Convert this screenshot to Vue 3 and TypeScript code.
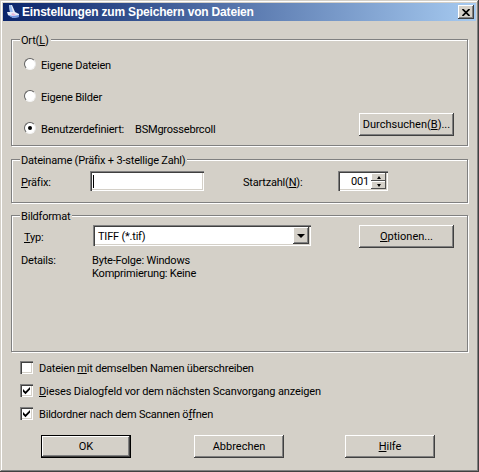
<script setup lang="ts">
const radios = [
  { label: 'Eigene Dateien', checked: false },
  { label: 'Eigene Bilder', checked: false },
  { label: 'Benutzerdefiniert:', checked: true },
]
</script>

<template>
  <div class="win">
    <div class="title">
      <svg class="appicon" width="16" height="16" viewBox="0 0 16 16">
        <path d="M4 1 L7 1 L10 8 L14 10 L14 13 L8 14 L3 11 L2 8 L5 8 Z" fill="#e6ecf8" />
        <path d="M4 1 L6 1 L8 8 L5 8 Z" fill="#9cbdf0" />
        <path d="M3 11 L8 14 L14 13 L14 11 L8 12 Z" fill="#6f95e0" />
        <path d="M6 10 L8 9 L11 11 L8 12 Z" fill="#e4b6d8" />
      </svg>
      <span class="title-text">Einstellungen zum Speichern von Dateien</span>
      <span class="close">
        <svg width="8" height="7" viewBox="0 0 8 7">
          <path d="M0.5 0 L7.5 7 M7.5 0 L0.5 7" stroke="#000" stroke-width="1.7" fill="none" />
        </svg>
      </span>
    </div>

    <div class="body">
      <section class="group ort">
        <div class="legend">Ort(<u>L</u>)</div>
        <div class="radios">
          <div v-for="r in radios" :key="r.label" class="radio-row">
            <span class="radio" :class="{ on: r.checked }"></span>
            <span class="radio-label">{{ r.label }}</span>
            <span v-if="r.checked" class="radio-path">BSMgrossebrcoll</span>
          </div>
        </div>
        <button class="btn browse">Durchsuchen(<u>B</u>)...</button>
      </section>

      <section class="group name">
        <div class="legend">Dateiname (Präfix + 3-stellige Zahl)</div>
        <div class="name-row">
          <span class="prefix-label"><u>P</u>räfix:</span>
          <span class="field prefix"><i class="caret"></i></span>
          <span class="start-label">Startzahl(<u>N</u>):</span>
          <span class="field spin">
            <span class="spin-val">001</span>
            <span class="spin-btns">
              <span class="spin-btn"><i class="tri up"></i></span>
              <span class="spin-btn"><i class="tri down"></i></span>
            </span>
          </span>
        </div>
      </section>

      <section class="group format">
        <div class="legend">Bildformat</div>
        <div class="type-row">
          <span class="type-label"><u>T</u>yp:</span>
          <span class="field combo">
            <span class="combo-val">TIFF (*.tif)</span>
            <span class="combo-btn"><i class="tri big"></i></span>
          </span>
          <button class="btn options"><u>O</u>ptionen...</button>
        </div>
        <div class="details">
          <span class="details-key">Details:</span>
          <span>Byte-Folge: Windows<br />Komprimierung: Keine</span>
        </div>
      </section>

      <div class="checks">
        <div class="check-row">
          <span class="check"></span>
          <span class="check-label">Dateien <u>m</u>it demselben Namen überschreiben</span>
        </div>
        <div class="check-row">
          <span class="check">
            <svg width="9" height="9" viewBox="0 0 9 9"><path d="M1 3 L3.5 5.5 L8 1 V3.6 L3.5 8.2 L1 5.7 Z" fill="#000" /></svg>
          </span>
          <span class="check-label wide"><u>D</u>ieses Dialogfeld vor dem nächsten Scanvorgang anzeigen</span>
        </div>
        <div class="check-row">
          <span class="check">
            <svg width="9" height="9" viewBox="0 0 9 9"><path d="M1 3 L3.5 5.5 L8 1 V3.6 L3.5 8.2 L1 5.7 Z" fill="#000" /></svg>
          </span>
          <span class="check-label">Bildordner nach dem Scannen ö<u>f</u>fnen</span>
        </div>
      </div>

      <div class="actions">
        <button class="btn action default">OK</button>
        <button class="btn action">Abbrechen</button>
        <button class="btn action last"><u>H</u>ilfe</button>
      </div>
    </div>
  </div>
</template>

<style scoped>
.win {
  box-sizing: border-box;
  width: 479px;
  height: 472px;
  background: #d4d0c8;
  padding: 3px;
  box-shadow: inset -1px -1px 0 #404040, inset 1px 1px 0 #d4d0c8, inset -2px -2px 0 #808080, inset 2px 2px 0 #ffffff;
  font-family: Roboto, "Liberation Sans", sans-serif;
  font-size: 11px;
  letter-spacing: -0.2px;
  color: #000;
  overflow: hidden;
}
.title {
  height: 18px;
  background: linear-gradient(90deg, #0a246a, #a6caf0);
  display: flex;
  align-items: center;
  padding-left: 2px;
  padding-right: 2px;
}
.appicon {
  flex: none;
}
.title-text {
  margin-left: 1px;
  font-family: "Liberation Sans", sans-serif;
  font-weight: 700;
  font-size: 12px;
  letter-spacing: -0.18px;
  color: #fff;
  white-space: nowrap;
  flex: 1;
}
.close {
  width: 16px;
  height: 14px;
  background: #d4d0c8;
  box-shadow: inset -1px -1px 0 #404040, inset 1px 1px 0 #fff, inset -2px -2px 0 #808080;
  display: flex;
  align-items: center;
  justify-content: center;
}
.body {
  padding: 18px 7px 0 8px;
}
.group {
  position: relative;
  box-sizing: border-box;
  width: 457px;
  border: 1px solid #808080;
  box-shadow: 1px 1px 0 #fff, inset 1px 1px 0 #fff;
}
.legend {
  position: absolute;
  top: -6px;
  left: 8px;
  background: #d4d0c8;
  padding: 0 2px 0 1px;
  line-height: 13px;
  white-space: nowrap;
}
.ort {
  height: 107px;
  padding: 18px 0 0 12px;
  position: relative;
}
.radios {
  display: flex;
  flex-direction: column;
  gap: 20px;
}
.radio-row {
  display: flex;
  align-items: center;
  height: 12px;
}
.radio {
  position: relative;
  box-sizing: border-box;
  width: 12px;
  height: 12px;
  border-radius: 50%;
  background: #fff;
  border: 1px solid;
  border-color: #606060 #e8e8e8 #f4f4f4 #606060;
  flex: none;
}
.radio.on::after {
  content: "";
  position: absolute;
  left: 3px;
  top: 3px;
  width: 4px;
  height: 4px;
  border-radius: 50%;
  background: #000;
}
.radio-label {
  margin-left: 5px;
  width: 94px;
  padding-top: 2px;
}
.radio-path {
  padding-top: 2px;
}
.btn {
  box-sizing: border-box;
  margin: 0;
  padding: 0;
  border: 0;
  background: #d4d0c8;
  font: inherit;
  letter-spacing: 0;
  color: #000;
  box-shadow: inset -1px -1px 0 #404040, inset 1px 1px 0 #fff, inset -2px -2px 0 #808080;
}
.browse {
  position: absolute;
  left: 347px;
  top: 73px;
  width: 95px;
  height: 23px;
}
.name {
  height: 44px;
  margin-top: 13px;
  padding-top: 11px;
}
.name-row {
  display: flex;
  align-items: center;
  height: 20px;
}
.prefix-label {
  margin-left: 9px;
  width: 69px;
  padding-top: 3px;
}
.field {
  box-sizing: border-box;
  display: flex;
  align-items: center;
  background: #fff;
  box-shadow: inset 1px 1px 0 #808080, inset 2px 2px 0 #404040, inset -1px -1px 0 #fff, inset -2px -2px 0 #d4d0c8;
}
.prefix {
  width: 114px;
  height: 20px;
  padding-left: 3px;
}
.caret {
  width: 1px;
  height: 13px;
  background: #000;
}
.start-label {
  margin-left: 39px;
  width: 95px;
  padding-top: 3px;
}
.spin {
  position: relative;
  width: 50px;
  height: 20px;
  padding: 2px;
}
.spin-val {
  flex: 1;
  text-align: right;
  padding-right: 2px;
  padding-top: 1px;
}
.spin-btns {
  width: 15px;
  height: 16px;
  display: flex;
  flex-direction: column;
}
.spin-btn {
  flex: 1;
  display: flex;
  align-items: center;
  justify-content: center;
  background: #d4d0c8;
  box-shadow: inset -1px -1px 0 #505050, inset 1px 1px 0 #fff;
}
.tri {
  width: 0;
  height: 0;
  border-left: 2.5px solid transparent;
  border-right: 2.5px solid transparent;
}
.tri.up {
  border-bottom: 3px solid #000;
}
.tri.down {
  border-top: 3px solid #000;
}
.tri.big {
  border-left-width: 4px;
  border-right-width: 4px;
  border-top: 4px solid #000;
}
.format {
  height: 137px;
  margin-top: 12px;
}
.type-row {
  display: flex;
  align-items: flex-start;
  padding-top: 9px;
}
.type-label {
  margin-left: 12px;
  width: 69px;
  line-height: 25px;
}
.combo {
  width: 218px;
  height: 21px;
  padding: 2px;
}
.combo-val {
  flex: 1;
  padding-left: 3px;
  padding-top: 1px;
}
.combo-btn {
  box-sizing: border-box;
  width: 16px;
  height: 17px;
  display: flex;
  align-items: center;
  justify-content: center;
  background: #d4d0c8;
  box-shadow: inset -1px -1px 0 #404040, inset 1px 1px 0 #fff, inset -2px -2px 0 #808080;
}
.options {
  margin-left: 48px;
  width: 95px;
  height: 23px;
}
.details {
  display: flex;
  margin-top: 4px;
  padding-left: 9px;
  line-height: 13px;
}
.details-key {
  width: 71px;
}
.checks {
  margin-top: 9px;
  padding-left: 9px;
  display: flex;
  flex-direction: column;
  gap: 10px;
}
.check-row {
  display: flex;
  align-items: center;
  height: 13px;
  white-space: nowrap;
}
.check-label {
  padding-top: 2px;
}
.check-label.wide {
  letter-spacing: -0.12px;
}
.check {
  box-sizing: border-box;
  width: 13px;
  height: 13px;
  margin-right: 6px;
  background: #fff;
  display: flex;
  align-items: center;
  justify-content: center;
  box-shadow: inset 1px 1px 0 #808080, inset 2px 2px 0 #404040, inset -1px -1px 0 #fff, inset -2px -2px 0 #d4d0c8;
}
.actions {
  margin-top: 15px;
  padding-left: 30px;
  display: flex;
  gap: 63px;
}
.action {
  width: 90px;
  height: 23px;
}
.last {
  margin-left: -2px;
}
.default {
  outline: 1px solid #000;
  outline-offset: -1px;
  box-shadow: inset -2px -2px 0 #404040, inset 2px 2px 0 #fff, inset -3px -3px 0 #808080;
}
</style>

<style>
html, body { margin: 0; background: #d4d0c8; }
</style>
